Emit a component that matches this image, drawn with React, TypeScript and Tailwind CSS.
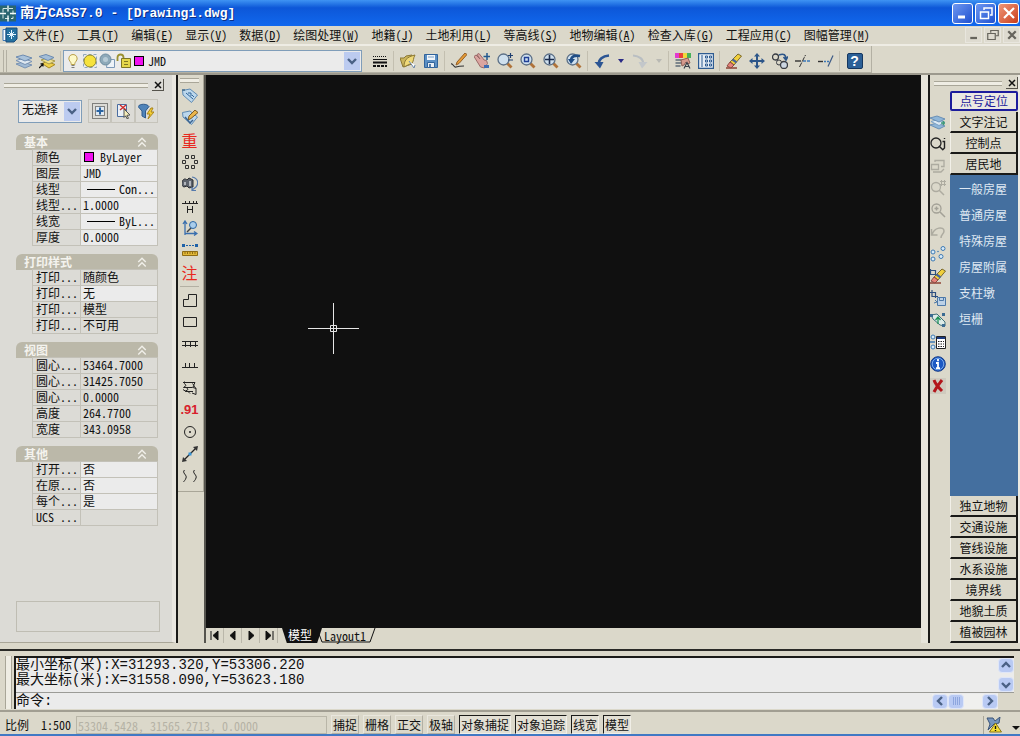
import { Fragment, useState } from 'react'
import type { ReactNode } from 'react'
import clsx from 'clsx'

function Icon({ children, className = 'h-4 w-4' }: { children: ReactNode; className?: string }) {
  return (
    <svg viewBox="0 0 16 16" fill="none" stroke="#3c5a86" strokeWidth="1" className={clsx('shrink-0', className)} aria-hidden="true">
      {children}
    </svg>
  )
}

const magnifier = (
  <>
    <path d="M10 10 14.500 14.500" stroke="#b0733a" strokeWidth="2.8" />
    <circle cx="6.500" cy="6.500" r="5.500" fill="#cfe0ee" stroke="#5b6f86" strokeWidth="1.300" />
  </>
)

const eraser = (
  <>
    <path d="M0 15h11" stroke="#8a3a2a" strokeWidth="1.400" />
    <path d="m4 9 8-8 3.500 2-7.500 9z" fill="#f0cf3c" stroke="#7d6a2a" />
    <path d="m4 9 4 3-3 3-4-2z" fill="#e7837a" stroke="#8a4a42" />
    <path d="m6.500 6.500 4 2.800" stroke="#46659c" strokeWidth="2.200" />
  </>
)

const tag = <path d="M.5 2.500 8 1l7.500 6-6 7.500L1 7z" fill="#bcd7ec" stroke="#5f8bb3" />

const icons: Record<string, ReactNode> = {
  app: (
    <>
      <path d="M0 0h16v16H0z" fill="#2a6670" stroke="none" />
      <path d="M3 3h10v10H3z" stroke="#d5e8e4" strokeDasharray="4 2" />
      <path d="M8 0v6M8 10v6M0 8h6M10 8h6" stroke="#f4fbfa" strokeWidth="1.400" />
    </>
  ),
  doc: (
    <>
      <path d="M1 2.500h3v11H1z" fill="#fff" stroke="#3f78b5" />
      <path d="M4 1h11v11l-3 3H4z" fill="#25719f" stroke="#1b4d7d" />
      <path d="M9.500 3v9M5 7.500h9M7 5l5 5M12 5l-5 5" stroke="#e4f4ff" />
    </>
  ),
  layers: (
    <>
      <path d="m0 11 7-2 9 3-7 3z" fill="#9fb9d3" stroke="#7892b3" />
      <path d="m0 7.500 7-2 9 3-7 3z" fill="#dde7f0" stroke="#7892b3" />
      <path d="m0 4 7-2 9 3-7 3z" fill="#a9c2da" stroke="#6d8bb0" />
    </>
  ),
  layerPrev: (
    <>
      <path d="m3 10.500 5-2 8 3-6 3.500z" fill="#f0d14a" stroke="#a88a22" />
      <path d="m2 7 6-2 8 3-6 3z" fill="#efe08a" stroke="#a79a4a" />
      <path d="m0 3.500 7-2 8 3-6 3z" fill="#a3bed8" stroke="#6d8bb0" />
      <path d="m0 15 4-4M1.500 10.800H4v2.700" stroke="#111" strokeWidth="1.200" />
    </>
  ),
  bulb: (
    <>
      <path d="M8 1.500a4 4 0 0 0-3.200 6.600C6 9.600 6.200 10 6.200 11.500h3.600c0-1.500.2-1.900 1.400-3.400A4 4 0 0 0 8 1.500z" fill="#fdf9c9" stroke="#b9a04a" />
      <path d="M6.500 12.500h3M6.500 14.500h3" stroke="#7c7c7c" />
    </>
  ),
  sun: (
    <>
      <path d="M1.500 1.500h13v13h-13z" stroke="#8fa6bd" strokeDasharray="3 2" />
      <circle cx="8" cy="8" r="6" fill="#f6e23c" stroke="#90872b" />
    </>
  ),
  freeze: (
    <>
      <path d="M8.500 6.500h7v8h-8z" fill="#eef3f8" stroke="#7d99b8" />
      <circle cx="6.500" cy="6.500" r="5.500" fill="#8ea9b9" stroke="#6d8b9e" />
      <circle cx="6.500" cy="6.500" r="2.500" fill="#b7cbd6" stroke="none" />
    </>
  ),
  lock: (
    <>
      <path d="M1.500 8V4.500c0-4 6-4 6 0V7" stroke="#9a9030" strokeWidth="1.800" />
      <path d="M5.500 5.500h9v9h-9z" fill="#e4d64a" stroke="#7d7524" />
      <path d="M8 8.500h4M8 11.500h4" stroke="#7d7524" />
    </>
  ),
  linetype: (
    <>
      <path d="M1 3.500h14" stroke="#111" strokeDasharray="1 1" />
      <path d="M1 6.500h14" stroke="#111" />
      <path d="M1 9.500h14" stroke="#111" strokeWidth="2" />
      <path d="M1 13h14" stroke="#111" strokeWidth="2" strokeDasharray="3 1" />
    </>
  ),
  open: (
    <>
      <path d="M0 5h4l2-2 6-1v9l-9 3z" fill="#cbb55c" stroke="#8b7835" />
      <path d="M4 14c0-6 2-10 11-12-2 3-1 6-3 8z" fill="#efd978" stroke="#8b7835" />
      <path d="m9 8 5 7 1-3" fill="#fff" stroke="#6b86a8" />
    </>
  ),
  save: (
    <>
      <path d="M1.500 1.500h13v13h-13z" fill="#5b8fc4" stroke="#31639b" />
      <path d="M4 2h8v5H4z" fill="#f1f5fa" stroke="none" />
      <path d="M4.500 9.500h7v5h-7z" fill="#e8eef5" stroke="#31639b" />
      <path d="M5 4h6" stroke="#7da0c4" />
      <path d="M7 11v3" stroke="#31639b" strokeWidth="1.600" />
    </>
  ),
  brush: (
    <>
      <path d="M0 11c2-1 3 4 5 3 3-1 5-1 8-1" stroke="#333" strokeWidth="1.200" />
      <path d="M5 12 6 9l8-9 2 1.500-8 9z" fill="#e69b35" stroke="#94602a" />
    </>
  ),
  pan: (
    <>
      <path d="M0 3.500 2 2l4 4-3-4.500L5 .5l4 5 1 1.500 2.500.5 1 3-3 4.500-4-1z" fill="#dba5a0" stroke="#9a6a68" />
      <path d="M13 0v7M9.500 3.500h6.500" stroke="#23588f" strokeWidth="1.500" />
      <path d="M10 12h5v3h-5z" fill="#3e6db3" stroke="none" />
    </>
  ),
  zoomRt: (
    <>
      {magnifier}
      <path d="M13.500 0v5M11 2.500h5M11 7h5" stroke="#1e3f70" strokeWidth="1.200" />
    </>
  ),
  zoomWin: (
    <>
      {magnifier}
      <path d="M4.500 4.500h4v4h-4z" stroke="#1f3f96" strokeWidth="1.400" />
    </>
  ),
  zoomAll: (
    <>
      {magnifier}
      <path d="M6.500 2v9M2 6.500h9" stroke="#1a2b4d" strokeWidth="1.600" />
    </>
  ),
  zoomPrev: (
    <>
      {magnifier}
      <path d="M5 8c0-5 4-6 9-5" stroke="#1f4d86" strokeWidth="2.600" />
      <path d="M2 6h7L5 11z" fill="#1f4d86" stroke="none" />
    </>
  ),
  undo: (
    <>
      <path d="M5 12C4 6 9 3 15 2.500" stroke="#2b5593" strokeWidth="2.600" />
      <path d="M.5 9h9L6 15.500z" fill="#2b5593" stroke="none" />
    </>
  ),
  redo: (
    <>
      <path d="M11 12c1-6-4-9-10-9.500" stroke="#b9bec2" strokeWidth="2.200" />
      <path d="M6.500 9h9L10 15.500z" fill="#c3c7ca" stroke="none" />
    </>
  ),
  palette: (
    <>
      <path d="M0 0h4v5H0z" fill="#e23ad0" stroke="none" />
      <path d="M4 0h4v5H4z" fill="#e8453a" stroke="none" />
      <path d="M8 0h4v5H8z" fill="#f0d93c" stroke="none" />
      <path d="M12 0h4v5h-4z" fill="#47b25a" stroke="none" />
      <path d="M.5 7h6M.5 10h6M.5 13h5" stroke="#5f6b78" strokeWidth="1.500" />
      <path d="m6 7 7-2 2 5-3 1-1-2-2 3-2 1z" fill="#d79a8d" stroke="#8d5f56" />
      <path d="m9 15.500 3-6 3 6M10 13.500h4" stroke="#3b4049" strokeWidth="1.200" />
    </>
  ),
  calc: (
    <>
      <path d="M.5.5h15v15H.500z" fill="#e5edf5" stroke="#2f5c91" strokeWidth="1.400" />
      <path d="M3 3h2M3 5h2M3 7h2M3 9h2M3 11h2M3 13h2" stroke="#2f5c91" />
      <path d="M7.500 3h2v2h-2zM11.500 3h2v2h-2zM7.500 7h2v2h-2zM11.500 7h2v2h-2zM7.500 11h2v2h-2zM11.500 11h2v2h-2z" stroke="#2f5c91" />
    </>
  ),
  eraser,
  move: (
    <>
      <path d="M8 2v12M2 8h12" stroke="#2d5689" strokeWidth="2" />
      <path d="m8 0 3 3.500H5zM8 16l3-3.500H5zM0 8l3.500-3v6zM16 8l-3.500-3v6z" fill="#2d5689" stroke="none" />
    </>
  ),
  copy: (
    <>
      <circle cx="3.500" cy="4" r="3" stroke="#3a3d44" strokeWidth="1.300" />
      <circle cx="7" cy="9.500" r="2.500" stroke="#3a3d44" />
      <circle cx="12" cy="12" r="3.500" fill="#ccd6e2" stroke="#3a3d44" strokeWidth="1.300" />
      <path d="M7 2c5-2 7 0 7 4M11.500 4l2.500 3 2-3.500" stroke="#2d5689" strokeWidth="1.600" />
    </>
  ),
  trim: (
    <>
      <path d="M0 8h6" stroke="#333" strokeWidth="1.400" />
      <path d="M8 8h8" stroke="#3c78b8" strokeWidth="1.400" strokeDasharray="3 1" />
      <path d="m4.500 14 6-12" stroke="#333" strokeDasharray="5 1" />
    </>
  ),
  extend: (
    <>
      <path d="M0 8.500h5" stroke="#333" strokeWidth="1.400" />
      <path d="M6 8.500h6" stroke="#3c78b8" strokeWidth="1.400" strokeDasharray="2 1" />
      <path d="m10 13.500 5-11" stroke="#3c5a86" strokeWidth="1.200" />
    </>
  ),
  pick: (
    <>
      <path d="M.5.5h15v15H.500z" stroke="#222" strokeDasharray="1 1" />
      <path d="M3.500 3.500h9v9h-9z" fill="#dfe9f3" stroke="#222" strokeDasharray="1 1" />
      <path d="M8 4.500v7M4.500 8h7" stroke="#2a64a2" strokeWidth="2" />
    </>
  ),
  select: (
    <>
      <path d="M2.500 1.500h9v12h-9z" fill="#eaf0f6" stroke="#4a6da0" />
      <path d="m5 2 6 5M11 2 5 7" stroke="#d02828" strokeWidth="1.400" />
      <path d="m9 6 6 6-3 .3 1.500 3-1.500.5-1.300-3L9 14.500z" fill="#f4ecb8" stroke="#555" />
    </>
  ),
  filter: (
    <>
      <path d="M0 3.500c2-3 9-3 11 0L7.500 8v7L4 13V8z" fill="#4f83b9" stroke="#2e5a8c" />
      <path d="m13 5-4 6h3l-2 5 6-7h-3l2-4z" fill="#f4cf35" stroke="#a8841c" />
    </>
  ),
  tag: (
    <>
      {tag}
      <path d="m4 5 7 6M6 5h3v3M10 7l2 2" stroke="#2f6499" />
      <path d="M0 2h3" stroke="#48708f" strokeWidth="1.600" />
    </>
  ),
  tagEdit: (
    <>
      {tag}
      <path d="m6 10 1-4 6-6 3 2.500-7 6z" fill="#eab54a" stroke="#7a5a24" />
      <path d="m3 7 5 6 3-3" stroke="#3b6490" strokeWidth="1.500" />
    </>
  ),
  nodes: <path d="M3.500 1.500h3v3h-3zM9.500 1.500h3v3h-3zM.500 6.500h3v3h-3zM12.500 6.500h3v3h-3zM3.500 11.500h3v3h-3zM9.500 11.500h3v3h-3z" stroke="#333" />,
  binocular: (
    <>
      <path d="M0 6c1-3 3-4 5-2l2-2 4 2v7l-4 1-2-2-3 1c-2-1-3-2-2-5z" fill="#5d636c" stroke="#2b2e34" />
      <path d="M3 6v3M8 5v5" stroke="#d6d9de" strokeWidth="1.400" />
      <path d="M10 1c6 1 7 6 4 10l-4 3M10 11v3.500h4" stroke="#5479ac" strokeWidth="1.200" />
    </>
  ),
  fence: <path d="M0 5.500h16M3.500 3v3M7.500 3v3M11.500 3v3M14.500 3v3M5.500 8v7M10.500 8v7M5.500 11.500h5" stroke="#222" />,
  axis: (
    <>
      <path d="M3 15V2M1 4l2-3 2 3M3 13.500h11M12 11.500l3 2-3 2" stroke="#3a6fae" strokeWidth="1.300" />
      <path d="m10 7-5 5" stroke="#444" strokeWidth="1.500" />
      <circle cx="11" cy="5" r="3.500" fill="#a9cdeb" stroke="#2c66a3" />
    </>
  ),
  measure: (
    <>
      <path d="M0 2h3v3H0zM13 2h3v3h-3z" fill="#1f62a8" stroke="none" />
      <path d="M4 3.500h8" stroke="#1f62a8" strokeDasharray="2 1" />
      <path d="M.5 9.500h15v4H.500z" fill="#e2b838" stroke="#8f6d16" />
      <path d="M3 9v3M5.500 9v3M8 9v3M10.500 9v3M13 9v3" stroke="#8f6d16" />
    </>
  ),
  poly: <path d="M1.500 7.500h5v-5h8v12h-13z" stroke="#222" />,
  rect: <path d="M1.500 3.500h13v9h-13z" stroke="#222" />,
  rail: <path d="M0 5.500h16M0 9.500h16M3.500 5v6M8.500 5v6M13.500 5v6" stroke="#222" />,
  comb: <path d="M0 9.500h16M3.500 5v4M7.500 5v4M12.500 5v4" stroke="#222" />,
  spiral: (
    <path
      d="M1 2.500h12M2.500 1.500v2L4 5.500 1.500 7.500h9L12 5.500 10.500 3.500M4.500 7.500 6 9.500l-3 2M1 9.500l3 2h7M11 7.500l3 1M13 2.500l-1.500 3 2.500 3v6l-4-1.500M6 11.500l2 2"
      stroke="#222"
    />
  ),
  circle: (
    <>
      <circle cx="8" cy="8" r="5.500" stroke="#222" />
      <circle cx="8" cy="8" r="1" fill="#222" stroke="none" />
    </>
  ),
  line: (
    <>
      <path d="M1.500 14.500 14.500 1.500" stroke="#222" strokeWidth="1.300" />
      <path d="m0 16 1-5 4 4zM16 0l-5 1 4 4z" fill="#333" stroke="none" />
      <path d="M6.500 6.500h3v3h-3z" fill="#3592d6" stroke="none" />
    </>
  ),
  wave: <path d="M2.500 2c-3 3 3 5 1.500 8-.5 2-2 3-2.500 4M12.500 2c-3 3 3 5 1.500 8-.5 2-2 3-2.500 4" stroke="#222" />,
  layers3: (
    <>
      <path d="m0 11 7-2 8 3-6 3z" fill="#8fb6d8" stroke="#6b90b5" />
      <path d="m1 7.500 7-2 7 3-6 3z" fill="#dce9f4" stroke="#7aa0c4" />
      <path d="m0 4 7-2 8 3-6 3z" fill="#8fb6d8" stroke="#6b90b5" />
      <path d="M11 9h4M13.500 7v4" stroke="#3f9a78" strokeWidth="1.500" />
    </>
  ),
  find: (
    <>
      <circle cx="6" cy="7" r="5" stroke="#222" strokeWidth="1.300" />
      <path d="m9 10 4 4M14.500 2v1M12.500 5.500h2V12l-2 2" stroke="#222" strokeWidth="1.400" />
    </>
  ),
  grayBox: <path d="M1.500 6.500h7v5h-7zM5 4V2.500h9v6h-3M3 14h8l3-3" stroke="#adaba0" strokeWidth="1.300" />,
  grayZoom: (
    <>
      <circle cx="6" cy="7" r="4.500" stroke="#adaba0" strokeWidth="1.300" />
      <path d="m9 10 5 5" stroke="#adaba0" strokeWidth="1.500" />
      <path d="M10 1.500h6M10 4.500h6M11.500 0v6M14.500 0v6" stroke="#adaba0" />
    </>
  ),
  grayZoomIn: (
    <>
      <circle cx="6.500" cy="6.500" r="4.500" stroke="#a3a197" strokeWidth="1.300" />
      <path d="m10 10 5 5M4.500 6.500h4M6.500 4.500v4" stroke="#a3a197" strokeWidth="1.500" />
    </>
  ),
  grayUndo: <path d="M1.500 5v6h6M2 11c2-8 12-9 12-4 0 3-3 3-3 7" stroke="#adaba0" strokeWidth="1.500" />,
  dots: (
    <>
      <circle cx="3" cy="6" r="2" fill="#d9ebf8" stroke="#3d7ab3" />
      <circle cx="13" cy="2.500" r="2" fill="#d9ebf8" stroke="#3d7ab3" />
      <circle cx="8" cy="5.500" r=".8" fill="#3d7ab3" stroke="none" />
      <circle cx="3" cy="13" r="2" fill="#d9ebf8" stroke="#3d7ab3" />
      <circle cx="11" cy="10.500" r="2" fill="#d9ebf8" stroke="#3d7ab3" />
    </>
  ),
  cropErase: (
    <>
      {eraser}
      <path d="M.500 1v5.500H6M.500 2.500h5V7" stroke="#2d4f80" strokeWidth="1.200" />
    </>
  ),
  cropSave: (
    <>
      <path d="M2 0v6.500h6M0 2.500h5.500V8" stroke="#2d4f80" strokeWidth="1.200" />
      <path d="M7.500 7.500h8v8h-8z" fill="#bcd1e6" stroke="#4d79a8" />
      <path d="M9.500 7.500h4v3h-4zM5 10l2 2-3 1" stroke="#4d79a8" />
    </>
  ),
  swap: (
    <>
      <path d="m1 3 6-1 8 8v4l-5-1-7-6z" fill="#dcebe8" stroke="#3f6f79" />
      <path d="M8 12V6M5.500 8 8 5l2.500 3" stroke="#1f9155" strokeWidth="1.300" />
      <path d="M0 2h3v3H0zM12 1h3v3h-3zM12 12h3v3h-3z" fill="#3b6b92" stroke="none" />
    </>
  ),
  list: (
    <>
      <circle cx="3" cy="3" r="2" fill="#d9ebf8" stroke="#3d7ab3" />
      <circle cx="3" cy="13" r="2" fill="#d9ebf8" stroke="#3d7ab3" />
      <path d="M0 8h5" stroke="#3d7ab3" strokeWidth="1.500" />
      <path d="M6.500 2.500h9v12h-9z" fill="#fff" stroke="#222" />
      <path d="M7 4h8" stroke="#1b3b80" strokeWidth="2" />
      <path d="M8 7.500h6M8 10h6M8 12.500h6" stroke="#222" strokeDasharray="1.500 1" />
    </>
  ),
  info: (
    <>
      <circle cx="8" cy="8" r="7.300" fill="#1c59c4" stroke="#163b86" />
      <circle cx="8" cy="8" r="5.800" stroke="#8fbcf3" strokeWidth=".8" />
      <path d="M8 3v2.200M6 7h2v5M6 12.200h4" stroke="#fff" strokeWidth="1.800" />
    </>
  ),
  cross: (
    <>
      <path d="M0 0h16v16H0z" fill="#cfcabe" stroke="none" />
      <path d="M4 2c1 3 3 6 8 11M12 2C9 6 7 8 4 14" stroke="#b3151b" strokeWidth="3" />
    </>
  ),
  warn: (
    <>
      <path d="M1 1h6l2 3 5-4-1 6-5 1-6 6 2-6z" fill="#7695bd" stroke="#3b5478" />
      <path d="M9.500 6 15.500 15h-12z" fill="#f7df35" stroke="#88761a" />
      <path d="M9.500 9v3M9.500 13v1" stroke="#111" strokeWidth="1.400" />
    </>
  ),
}

const menus: [string, string][] = [
  ['文件', 'F'], ['工具', 'T'], ['编辑', 'E'], ['显示', 'V'], ['数据', 'D'], ['绘图处理', 'W'], ['地籍', 'J'],
  ['土地利用', 'L'], ['等高线', 'S'], ['地物编辑', 'A'], ['检查入库', 'G'], ['工程应用', 'C'], ['图幅管理', 'M'],
]

const toolGroups = [
  ['linetype'],
  ['open', 'save'],
  ['brush', 'pan', 'zoomRt', 'zoomWin', 'zoomAll', 'zoomPrev'],
  ['undo', 'drop', 'redo', 'dropOff'],
  ['palette', 'calc'],
  ['eraser', 'move', 'copy', 'trim', 'extend'],
]

const drawTools = ['tag', 'tagEdit', '重', 'nodes', 'binocular', 'fence', 'axis', 'measure', '注']
const drawTools2 = ['poly', 'rect', 'rail', 'comb', 'spiral', '.91', 'circle', 'line', 'wave']
const sideTools = ['layers3', 'find', 'grayBox', 'grayZoom', 'grayZoomIn', 'grayUndo', 'dots', 'cropErase', 'cropSave', 'swap', 'list', 'info', 'cross']

type Row = { label: string; value: string; edit?: boolean; kind?: 'color' | 'line' }

const groups: { title: string; rows: Row[] }[] = [
  {
    title: '基本',
    rows: [
      { label: '颜色', value: 'ByLayer', edit: true, kind: 'color' },
      { label: '图层', value: 'JMD', edit: true },
      { label: '线型', value: 'Con...', edit: true, kind: 'line' },
      { label: '线型...', value: '1.0000', edit: true },
      { label: '线宽', value: 'ByL...', edit: true, kind: 'line' },
      { label: '厚度', value: '0.0000', edit: true },
    ],
  },
  {
    title: '打印样式',
    rows: [
      { label: '打印...', value: '随颜色' },
      { label: '打印...', value: '无', edit: true },
      { label: '打印...', value: '模型' },
      { label: '打印...', value: '不可用' },
    ],
  },
  {
    title: '视图',
    rows: [
      { label: '圆心...', value: '53464.7000' },
      { label: '圆心...', value: '31425.7050' },
      { label: '圆心...', value: '0.0000' },
      { label: '高度', value: '264.7700' },
      { label: '宽度', value: '343.0958' },
    ],
  },
  {
    title: '其他',
    rows: [
      { label: '打开...', value: '否', edit: true },
      { label: '在原...', value: '否', edit: true },
      { label: '每个...', value: '是', edit: true },
      { label: 'UCS ...', value: '' },
    ],
  },
]

const topMenus = ['文字注记', '控制点', '居民地']
const subMenus = ['一般房屋', '普通房屋', '特殊房屋', '房屋附属', '支柱墩', '垣栅']
const bottomMenus = ['独立地物', '交通设施', '管线设施', '水系设施', '境界线', '地貌土质', '植被园林']

const modes = [
  { label: '捕捉', on: false },
  { label: '栅格', on: false },
  { label: '正交', on: false },
  { label: '极轴', on: false },
  { label: '对象捕捉', on: true },
  { label: '对象追踪', on: true },
  { label: '线宽', on: true },
  { label: '模型', on: true },
]

const arrows = {
  up: 'm3 8 4-4 4 4',
  down: 'm3 5 4 4 4-4',
  left: 'm9 3-4 4 4 4',
  right: 'm5 3 4 4-4 4',
}

function Arrow({ dir }: { dir: keyof typeof arrows }) {
  return (
    <svg viewBox="0 0 14 14" className="h-3.5 w-3.5" fill="none" stroke="#4a6185" strokeWidth="2.4" aria-hidden="true">
      <path d={arrows[dir]} />
    </svg>
  )
}

function ScrollButton({ dir }: { dir: keyof typeof arrows }) {
  return (
    <button aria-label={dir} className="flex h-[15px] w-4 items-center justify-center rounded-sm border border-[#dfe6f8] bg-[#b9caf3]">
      <Arrow dir={dir} />
    </button>
  )
}

function SelectArrow() {
  return (
    <span className="pointer-events-none absolute inset-y-0.5 right-0.5 flex w-4 items-center justify-center bg-[#bccbf0]">
      <Arrow dir="down" />
    </span>
  )
}

function ToolButton({ name }: { name: string }) {
  if (name === 'drop' || name === 'dropOff') {
    return (
      <button aria-label={name} className="flex h-[22px] w-[15px] items-center justify-center">
        <svg viewBox="0 0 6 4" className="h-1 w-1.5" aria-hidden="true">
          <path d="M0 0h6L3 4z" fill={name === 'drop' ? '#2a2a86' : '#b9b9b4'} />
        </svg>
      </button>
    )
  }
  return (
    <button aria-label={name} className="flex h-[22px] w-[23px] items-center justify-center">
      <Icon>{icons[name]}</Icon>
    </button>
  )
}

function StripButton({ name }: { name: string }) {
  return (
    <button aria-label={name} className="flex h-[22px] w-full items-center justify-center">
      {icons[name] ? (
        <Icon>{icons[name]}</Icon>
      ) : name === '.91' ? (
        <span className="font-['Liberation_Sans'] text-[13px] font-bold leading-4 text-[#d8202a]">.91</span>
      ) : (
        <span className="text-base leading-4 text-[#e8281e]">{name}</span>
      )}
    </button>
  )
}

function Separator() {
  return <span className="mx-0.5 h-5 w-px bg-[#c3bfb0]" />
}

function Grip({ vertical = false }: { vertical?: boolean }) {
  return vertical ? (
    <span className="h-full w-[7px] shrink-0 border-x border-[#a9a698] bg-[#efede4]" />
  ) : (
    <span className="h-[5px] min-w-0 flex-1 border-y border-[#a9a698] bg-[#efede4]" />
  )
}

function CloseBox() {
  return (
    <button aria-label="关闭" className="flex h-3 w-3 items-center justify-center border-b border-r border-[#55534c]">
      <svg viewBox="0 0 8 8" className="h-2 w-2" stroke="#111" strokeWidth="1.5" aria-hidden="true">
        <path d="m1 1 6 6M7 1 1 7" />
      </svg>
    </button>
  )
}

function TitleBar() {
  const btn = 'flex h-[21px] w-[21px] items-center justify-center rounded-[3px] border border-white'
  return (
    <header className="flex h-[26px] shrink-0 items-center bg-linear-to-b from-[#3f93f3] via-[#0d57d8] via-30% to-[#1168ee] pr-px">
      <Icon className="h-[17px] w-4">{icons.app}</Icon>
      <h1 className="ml-1 flex-1 font-['Liberation_Mono','Noto_Sans_CJK_SC',monospace] text-[13px] font-bold leading-5 text-white [text-shadow:1px_1px_0_#0a2f86]">
        <span className="text-sm leading-5">南方</span>CASS7.0 - [Drawing1.dwg]
      </h1>
      <div className="flex gap-0.5">
        <button aria-label="最小化" className={clsx(btn, 'bg-linear-to-br from-[#6f97f0] to-[#1f4fd0]')}>
          <Icon>
            <path d="M3 12h7" stroke="#fff" strokeWidth="3" />
          </Icon>
        </button>
        <button aria-label="还原" className={clsx(btn, 'bg-linear-to-br from-[#6f97f0] to-[#1f4fd0]')}>
          <Icon>
            <path d="M6 5V3h8v7h-2M2.500 7h8v6.500h-8z" stroke="#fff" strokeWidth="1.500" />
          </Icon>
        </button>
        <button aria-label="关闭" className={clsx(btn, 'bg-linear-to-br from-[#ee9677] to-[#c93a17]')}>
          <Icon>
            <path d="m3 3 10 10M13 3 3 13" stroke="#fff" strokeWidth="2.200" />
          </Icon>
        </button>
      </div>
    </header>
  )
}

function MenuBar() {
  const mdi = 'flex h-4 w-[17px] items-center justify-center border border-[#e8e6de] bg-[#dedbd0]'
  return (
    <div className="flex h-5 shrink-0 items-center border-b-2 border-[#eeece4] pl-0.5">
      <Icon>{icons.doc}</Icon>
      <nav className="ml-[5px] flex flex-1 gap-3">
        {menus.map(([name, key]) => (
          <button key={name} className="whitespace-nowrap leading-[18px]">
            {name}(<span className="underline">{key}</span>)
          </button>
        ))}
      </nav>
      <div className="flex gap-0.5">
        <button aria-label="最小化窗口" className={mdi}>
          <Icon className="h-3 w-3">
            <path d="M3 12h9" stroke="#66645c" strokeWidth="3" />
          </Icon>
        </button>
        <button aria-label="还原窗口" className={mdi}>
          <Icon className="h-3 w-3">
            <path d="M5 5V2h10v7h-3M1 6h10v8H1z" stroke="#66645c" strokeWidth="1.600" />
          </Icon>
        </button>
        <button aria-label="关闭窗口" className={mdi}>
          <Icon className="h-3 w-3">
            <path d="m3 3 10 10M13 3 3 13" stroke="#66645c" strokeWidth="3" />
          </Icon>
        </button>
      </div>
    </div>
  )
}

function Toolbar() {
  return (
    <div className="flex h-[29px] shrink-0 border-b-2 border-[#9c998d]">
      <div className="flex items-center border-b border-r border-[#b3b0a3] pl-[3px] pr-1 pt-1">
        <span className="mr-[5px] h-full w-1 border-x border-[#b3b0a3]" />
        <ToolButton name="layers" />
        <ToolButton name="layerPrev" />
        <Separator />
        <div className="relative w-[299px]">
          <select aria-label="图层" className="block h-[22px] w-full appearance-none border border-[#7f9db9] bg-[#ebebeb] pl-[84px] text-xs leading-4">
            <option>JMD</option>
          </select>
          <div className="pointer-events-none absolute inset-y-0 left-0.5 flex items-center gap-px">
            <Icon>{icons.bulb}</Icon>
            <Icon>{icons.sun}</Icon>
            <Icon>{icons.freeze}</Icon>
            <Icon>{icons.lock}</Icon>
            <span className="ml-px h-2.5 w-2.5 border border-black bg-[#f010f0]" />
          </div>
          <SelectArrow />
        </div>
        <span className="w-1.5" />
        {toolGroups.map((group, i) => (
          <Fragment key={i}>
            {group.map(name => (
              <ToolButton key={name} name={name} />
            ))}
            <Separator />
          </Fragment>
        ))}
        <button aria-label="帮助" className="flex h-[22px] w-[25px] items-center justify-center">
          <span className="flex h-4 w-4 items-center justify-center rounded-xs border border-[#16375f] bg-[#2c6097] font-['Liberation_Sans'] text-sm font-bold leading-4 text-white">?</span>
        </button>
      </div>
    </div>
  )
}

function PropertyGroup({ title, rows }: { title: string; rows: Row[] }) {
  const [open, setOpen] = useState(true)
  return (
    <section>
      <button onClick={() => setOpen(!open)} className="flex h-4 w-full items-center justify-between rounded-t-md bg-[#bbb8a9] pl-2 pr-2.5 font-bold leading-4 text-[#f4f3ee]">
        {title}
        <Icon className="h-3 w-3">
          <path d="m3 8 5-5 5 5M3 14l5-5 5 5" stroke="#f1f0ea" strokeWidth="1.800" />
        </Icon>
      </button>
      {open && (
        <div className="-mt-px pl-4">
          <table className="w-full table-fixed border-collapse">
            <tbody>
              {rows.map((r, i) => (
                <tr key={i} className="h-4">
                  <th scope="row" className="w-12 whitespace-nowrap border border-[#c3c1b8] p-0 pl-[3px] text-left font-normal leading-[14px]">
                    <span className="block h-[15px]">{r.label}</span>
                  </th>
                  <td className={clsx('whitespace-nowrap border border-[#c3c1b8] p-0 pl-0.5 leading-[14px]', r.edit && 'bg-[#ebebeb]')}>
                    <span className="flex h-[15px] items-center pb-px">
                      {r.kind === 'color' && <span className="mr-1.5 ml-px h-2.5 w-2.5 border border-black bg-[#f010f0]" />}
                      {r.kind === 'line' && <span className="mx-1 h-px w-7 bg-black" />}
                      {r.value}
                    </span>
                  </td>
                </tr>
              ))}
            </tbody>
          </table>
        </div>
      )}
    </section>
  )
}

function PropertyPanel() {
  return (
    <aside className="flex w-[178px] shrink-0 flex-col border-r-2 border-[#1a1a18] bg-[#dcdbd6]">
      <div className="flex flex-1 flex-col border-b border-r-4 border-b-[#a9a698] border-r-[#e9e7e0] pl-4">
        <div className="-ml-3 flex h-5 shrink-0 items-center gap-1 pr-2">
          <Grip />
          <CloseBox />
        </div>
        <div className="mt-1 flex items-center gap-1.5 pr-3.5">
          <div className="relative ml-0.5 w-16">
            <select aria-label="选择对象" className="block h-[23px] w-full appearance-none border border-[#7f9db9] bg-[#ebebeb] pb-1 pl-[3px] text-xs leading-4">
              <option>无选择</option>
            </select>
            <SelectArrow />
          </div>
          <div className="flex flex-1">
            {['pick', 'select', 'filter'].map(name => (
              <button key={name} aria-label={name} className="flex h-6 flex-1 items-center justify-center border border-[#c6c4bb]">
                <Icon>{icons[name]}</Icon>
              </button>
            ))}
          </div>
        </div>
        <div className="mt-[11px] flex flex-col gap-2 pr-3.5">
          {groups.map(g => (
            <PropertyGroup key={g.title} {...g} />
          ))}
        </div>
        <div className="mb-2.5 mr-3 mt-auto h-[31px] border border-[#bfbdb3]" />
      </div>
    </aside>
  )
}

function DrawingArea() {
  const nav = ['M3 2v9M10 2 5 6.500l5 4.500z', 'M9 2 4 6.500 9 11z', 'm5 2 5 4.500L5 11z', 'm4 2 5 4.500L4 11zM11 2v9']
  return (
    <main className="flex min-w-0 flex-1 flex-col border-l-2 border-[#55544e]">
      <div className="relative flex-1 bg-[#101010]">
        <svg viewBox="0 0 51 51" className="absolute left-[102px] top-[228px] h-[51px] w-[51px]" fill="none" stroke="#e6e6e6" aria-hidden="true">
          <path d="M25.500 0v51M0 25.500h51M22.500 22.500h6v6h-6z" />
        </svg>
      </div>
      <div className="flex h-[15px] shrink-0">
        {nav.map((d, i) => (
          <button key={d} aria-label={`布局 ${i + 1}`} className="flex w-[18px] items-center justify-center border-r border-[#bab7aa]">
            <svg viewBox="0 0 13 13" className="h-[13px] w-[13px]" fill="#111" stroke="#111" aria-hidden="true">
              <path d={d} />
            </svg>
          </button>
        ))}
        <button className="ml-1 w-10 bg-[#101010] pb-0.5 pr-1 leading-3 text-white [clip-path:polygon(0_0,100%_0,88%_100%,12%_100%)]">模型</button>
        <button className="relative -ml-1 w-[58px] pr-1 leading-[14px]">
          <svg viewBox="0 0 58 15" className="absolute inset-0 h-full w-full" fill="none" stroke="#111" aria-hidden="true">
            <path d="m1 6 3 8h48l5-14" />
          </svg>
          Layout1
        </button>
      </div>
    </main>
  )
}

function ScreenMenu() {
  const item = 'h-[21px] w-full border-b-2 border-r-2 border-[#1a1a18] border-l border-l-[#f2f0e8] leading-[18px]'
  return (
    <aside className="flex w-[92px] shrink-0 flex-col border-r-2 border-l-2 border-l-[#1a1a18] border-r-[#eceae2]">
      <div className="flex h-4 shrink-0 items-center gap-1 pl-1">
        <Grip />
        <CloseBox />
      </div>
      <div className="flex flex-1">
        <div className="w-5 shrink-0 pr-1 pt-5">
          {sideTools.map(name => (
            <StripButton key={name} name={name} />
          ))}
        </div>
        <div className="flex flex-1 flex-col">
          <button className="mb-px h-5 w-full rounded-xs border-2 border-[#1c1c9c] bg-[#ebe9e2] leading-4 text-[#1c1c9c]">点号定位</button>
          {topMenus.map(m => (
            <button key={m} className={item}>
              {m}
            </button>
          ))}
          <ul className="flex-1 bg-[#446f9f] pl-[9px] pt-px text-[#dfe8f2]">
            {subMenus.map(m => (
              <li key={m}>
                <a href="#" className="block leading-[26px]">
                  {m}
                </a>
              </li>
            ))}
          </ul>
          {bottomMenus.map(m => (
            <button key={m} className={item}>
              {m}
            </button>
          ))}
        </div>
      </div>
    </aside>
  )
}

function CommandLine() {
  const [command, setCommand] = useState('')
  return (
    <section className="flex h-[69px] shrink-0 flex-col border-b-2 border-[#a19e92]">
      <div className="mb-[5px] h-2 shrink-0 border-b-2 border-[#2a2a27]" />
      <div className="flex min-h-0 flex-1 gap-0.5 pb-px pl-[5px] pr-1.5">
        <Grip vertical />
        <div className="flex min-w-0 flex-1 flex-col border-l-2 border-t-2 border-[#1a1a18] bg-[#ebebeb] font-['Liberation_Mono','Noto_Sans_CJK_SC',monospace] text-sm">
          <div className="flex h-[35px] shrink-0 border-b border-[#9b9b97]">
            <div className="flex-1 whitespace-nowrap leading-[15px]">
              <p>最小坐标(米):X=31293.320,Y=53306.220</p>
              <p>最大坐标(米):X=31558.090,Y=53623.180</p>
            </div>
            <div className="flex flex-col justify-between">
              <ScrollButton dir="up" />
              <ScrollButton dir="down" />
            </div>
          </div>
          <div className="flex flex-1 items-center">
            <label htmlFor="command" className="leading-4">命令:</label>
            <input id="command" value={command} onChange={e => setCommand(e.target.value)} className="h-4 min-w-0 flex-1 outline-none" />
            <div className="flex w-[66px] bg-[#f0f0ee]">
              <ScrollButton dir="left" />
              <span className="flex w-4 items-center justify-center gap-px rounded-sm border border-[#dfe6f8] bg-[#b9caf3]">
                {[0, 1, 2, 3].map(i => (
                  <span key={i} className="h-2 w-px bg-[#8ea6de]" />
                ))}
              </span>
              <span className="flex-1" />
              <ScrollButton dir="right" />
            </div>
            <span className="w-4 self-stretch bg-[#dbd8ca]" />
          </div>
        </div>
      </div>
    </section>
  )
}

function StatusBar() {
  return (
    <footer className="flex h-6 shrink-0 items-end border-b-2 border-[#4179c4] pl-[5px]">
      <span className="mr-3 leading-[18px]">比例</span>
      <span className="leading-[18px]">1:500</span>
      <input aria-label="坐标" readOnly value="53304.5428, 31565.2713, 0.0000" className="ml-[5px] mr-1 h-[18px] w-[251px] border border-[#b9b6a8] bg-transparent pl-px text-[#b5b2a5]" />
      <div className="flex gap-1">
        {modes.map(m => (
          <button
            key={m.label}
            className={clsx(
              'h-[19px] whitespace-nowrap border leading-[18px]',
              m.label.length > 2 ? 'w-[52px]' : 'w-7',
              m.on ? 'border-[#1a1a18] border-b-[#f0eee6] border-r-[#f0eee6] bg-[#e2dfd4]' : 'border-[#e9e7de] border-b-[#b3b0a3] border-r-[#b3b0a3]',
            )}
          >
            {m.label}
          </button>
        ))}
      </div>
      <div className="ml-auto flex items-center border-l border-[#a9a698]">
        <button aria-label="通知" className="flex h-[18px] w-5 items-center justify-center">
          <Icon>{icons.warn}</Icon>
        </button>
        <button aria-label="状态栏菜单" className="flex h-[18px] w-4 items-end justify-end pb-1">
          <svg viewBox="0 0 8 4" className="h-1 w-2" aria-hidden="true">
            <path d="M0 0h8L4 4z" fill="#111" />
          </svg>
        </button>
      </div>
    </footer>
  )
}

export default function App() {
  return (
    <div className="flex h-screen flex-col overflow-hidden bg-[#dbd8ca] font-['Noto_Sans_CJK_SC',sans-serif] text-xs text-[#111] [font-feature-settings:'hwid']">
      <TitleBar />
      <MenuBar />
      <Toolbar />
      <div className="flex min-h-0 flex-1">
        <PropertyPanel />
        <div className="w-[26px] shrink-0">
          <div className="border-b border-r border-[#a9a698] pb-1 pr-0.5">
            <div className="flex h-2.5 items-center px-0.5">
              <Grip />
            </div>
            {drawTools.map(name => (
              <StripButton key={name} name={name} />
            ))}
            <div className="mx-0.5 my-0.5 h-0.5 border-b border-[#b3b0a3]" />
            {drawTools2.map(name => (
              <StripButton key={name} name={name} />
            ))}
          </div>
        </div>
        <DrawingArea />
        <div className="w-[7px] shrink-0 bg-[#e6e4da]" />
        <ScreenMenu />
      </div>
      <CommandLine />
      <StatusBar />
    </div>
  )
}
